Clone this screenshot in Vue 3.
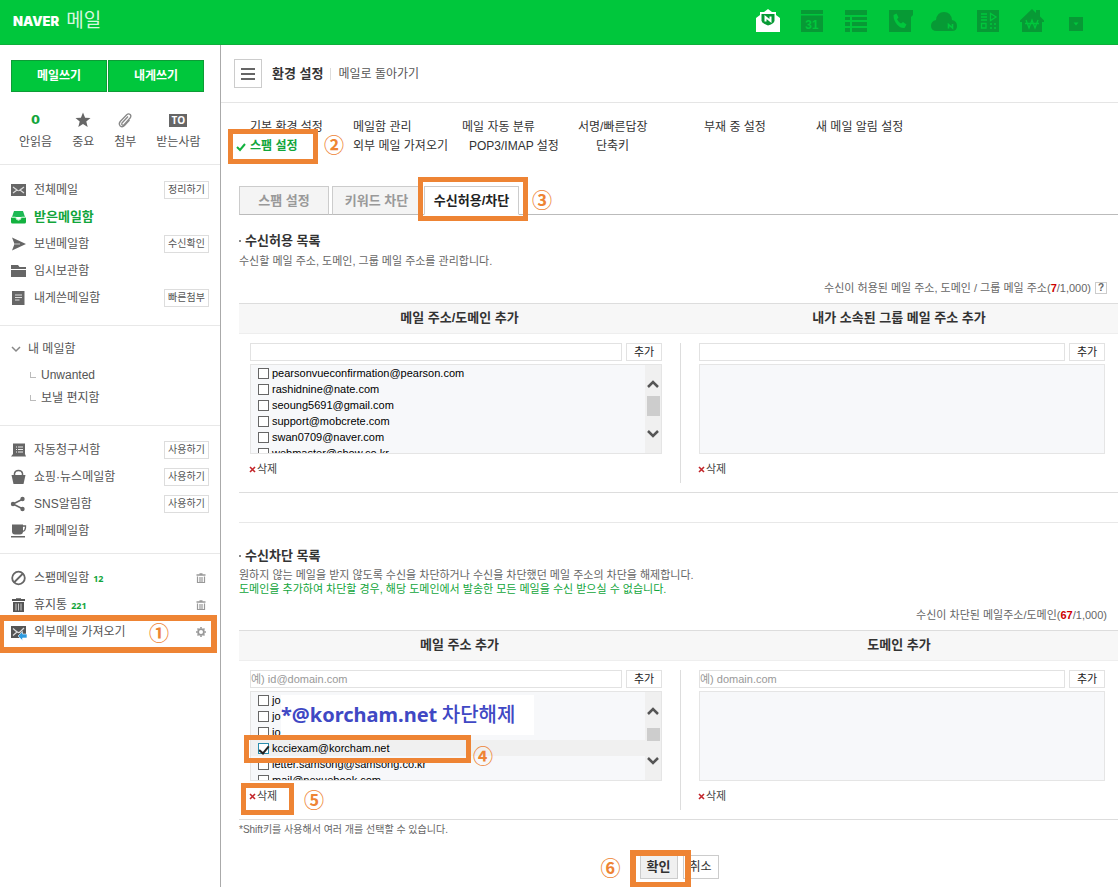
<script setup>
import { ref } from 'vue'

const icons = {
  envelope: '<path d="M0 2h15v12H0z" fill="#666"/><path d="M2 5l4 3-4 3M13 5L9 8l4 3M5 7Q7.500 10.500 10 7" fill="none" stroke="#ddd" stroke-width="1.200"/>',
  inbox: '<path d="M3 2h9l2 6H1z" fill="#1db954"/><path d="M0 8.500h4.500q.8 3 3 3t3-3H15V13q0 1.500-1.500 1.500h-12Q0 14.500 0 13z" fill="#12b23f"/><path d="M0.500 8.200h4q.8 2.600 3 2.600t3-2.600h4" fill="none" stroke="#b8f2c8"/>',
  sent: '<path d="M1 1.500L15 8 1 14.500 3.500 8z" fill="#666"/><path d="M3.500 8H9" stroke="#ccc"/>',
  folder: '<path d="M0 2h7l1.500 2H15v2H0zM0 7h15v7H0z" fill="#666"/>',
  note: '<path d="M1 1h12.500v14H1z" fill="#666"/><path d="M4 5h7M4 7.500h7M4 10h4.500" stroke="#ddd"/>',
  bill: '<path d="M2 1.500h12V12l1 2.500H0L2 12z" fill="#666"/><path d="M5 5h1M7 5h5M5 7.500h1M7 7.500h5M5 10h1M7 10h5" stroke="#eee"/>',
  bag: '<path d="M0.500 6h14L12.500 15h-10z" fill="#666"/><path d="M3.500 8V4.500Q4 1.500 7.500 1.500t4 3V8" fill="none" stroke="#666" stroke-width="1.500"/>',
  share: '<path d="M12 3L2 8l10 5" fill="none" stroke="#666" stroke-width="1.600"/><circle cx="11.500" cy="3" r="2.200" fill="#666"/><circle cx="2" cy="8" r="2.200" fill="#666"/><circle cx="11.500" cy="13" r="2.200" fill="#666"/>',
  cup: '<path d="M1 1.500h11v7q0 3-3 3H4q-3 0-3-3zM0 13h14v1.600H0z" fill="#666"/><path d="M12 3h2.500v1.500q0 3-3 4" fill="none" stroke="#666" stroke-width="1.300"/>',
  block: '<circle cx="7.500" cy="8" r="6.300" fill="none" stroke="#666" stroke-width="1.800"/><path d="M3 12.500l9-9" stroke="#666" stroke-width="1.800"/>',
  trash: '<path d="M1 3h13M5 2.200h5" stroke="#555" stroke-width="2"/><path d="M2 5h11v10H2z" fill="#555"/><path d="M5 6.500v7M7.500 6.500v7M10 6.500v7" stroke="#ccc"/>',
  external: '<path d="M0 2h15v12H0z" fill="#555"/><path d="M2 4.500l4 3.500-4 3.500M5 7q2.500 2.500 4 1L13 4" fill="none" stroke="#ddd" stroke-width="1.200"/><path d="M7 12l4.500-4.500V10H16v4h-4.500v2.500z" fill="#2d9be0" stroke="#fff" stroke-width=".6"/>',
  bin: '<path d="M0.500 2h9M3.500 1h3" stroke="#999" stroke-width="1.300"/><path d="M1.500 3.500v6h7v-6M4 4v5M6 4v5" fill="none" stroke="#999" stroke-width="1.200"/>',
  gear: '<circle cx="5" cy="5" r="2.900" fill="none" stroke="#999" stroke-width="1.800"/><path d="M5 0v1.500M5 8.500V10M0 5h1.500M8.500 5H10M1.500 1.500l1 1M7.500 7.500l1 1M8.500 1.500l-1 1M2.500 7.500l-1 1" stroke="#999" stroke-width="1.600"/>',
}

const services = [
  { label: '메일', svg: '<path d="M-1 9L3 6V3h4l4-3 4 3h4v3l4 3v14H-1z" fill="#fff"/><path d="M4.500 5h13v6.500q0 3-6.500 5-6.500-2-6.500-5z" fill="#079a35"/><path d="M8.500 12.500V8l5 4V7.500" fill="none" stroke="#fff" stroke-width="2"/>' },
  { label: '캘린더', svg: '<path d="M0 1h22v4H0zM0 6.500h22V23H0z" fill="#079a35"/><text x="11" y="19.500" text-anchor="middle" font-family="Liberation Sans, sans-serif" font-size="12" font-weight="700" fill="#00c73c">31</text>' },
  { label: '메모', svg: '<path d="M0 1h22v5H0zM0 8h5v3H0zM7 8h15v3H7zM0 13h5v4H0zM7 13h15v4H7zM0 19h5v4H0zM7 19h15v4H7z" fill="#079a35"/>' },
  { label: '주소록', svg: '<path d="M0 1h24v5l-2 2v15H0z" fill="#079a35"/><path d="M4.500 6l3-1.500 2 4-1.500 1.800q1.500 3 4 4.200l2-1.500 3.500 2.500-2 3.500q-4 .5-7.500-3.500T4.500 6z" fill="#00c73c"/>' },
  { label: '클라우드', svg: '<path d="M4 22q-6 0-6-5t5-6q1-8 8-8t8 8q5 1 5 6t-5 5z" fill="#079a35"/><path d="M15.500 19.500v-4l4 3.500v-4" fill="none" stroke="#00c73c" stroke-width="1.600"/>' },
  { label: '오피스', svg: '<path d="M0 1h22v22H0z" fill="#079a35"/><path d="M4 5h6M4 8h6M4 11h6M13 15h2M17 15h2M13 19h2M17 19h2" stroke="#00c73c" stroke-width="1.500"/><path d="M13.500 4.500v7L19 8zM4.500 14.500h4.500v4.500H4.500z" fill="none" stroke="#00c73c" stroke-width="1.300"/>' },
  { label: '가계부', svg: '<path d="M11 0l4 4V1h4v6.500l4 4V13h-2v10H1V13h-2v-1.500z" fill="#079a35"/><path d="M5 11l3 8 3-8 3 8 3-8M4 14.500h14" fill="none" stroke="#00c73c" stroke-width="1.300"/>' },
  { label: '더보기', svg: '<path d="M4 8h14v14H4z" fill="#079a35"/><path d="M8.500 13.500h5l-2.500 3z" fill="#00c73c"/>' },
]

const mainBoxes = [
  { icon: 'envelope', label: '전체메일', action: '정리하기' },
  { icon: 'inbox', label: '받은메일함', active: true },
  { icon: 'sent', label: '보낸메일함', action: '수신확인' },
  { icon: 'folder', label: '임시보관함' },
  { icon: 'note', label: '내게쓴메일함', action: '빠른첨부' },
]
const smartBoxes = [
  { icon: 'bill', label: '자동청구서함', action: '사용하기' },
  { icon: 'bag', label: '쇼핑·뉴스메일함', action: '사용하기' },
  { icon: 'share', label: 'SNS알림함', action: '사용하기' },
  { icon: 'cup', label: '카페메일함' },
]
const etcBoxes = [
  { icon: 'block', label: '스팸메일함', count: 12, tool: 'bin', toolLabel: '비우기' },
  { icon: 'trash', label: '휴지통', count: 221, tool: 'bin', toolLabel: '비우기' },
  { icon: 'external', label: '외부메일 가져오기', tool: 'gear', toolLabel: '설정', mark: '①' },
]

const allowed = ref([
  { mail: 'pearsonvueconfirmation@pearson.com', on: false },
  { mail: 'rashidnine@nate.com', on: false },
  { mail: 'seoung5691@gmail.com', on: false },
  { mail: 'support@mobcrete.com', on: false },
  { mail: 'swan0709@naver.com', on: false },
  { mail: 'webmaster@show.co.kr', on: false },
])
const blocked = ref([
  { mail: 'jo', on: false },
  { mail: 'jo', on: false },
  { mail: 'jo', on: false },
  { mail: 'kcciexam@korcham.net', on: true },
  { mail: 'letter.samsong@samsong.co.kr', on: false },
  { mail: 'mail@nexuebook.com', on: false },
])
</script>

<template>
  <div class="page">
    <header class="top">
      <a href="#" class="logo"><b>NAVER</b><span>메일</span></a>
      <nav class="services">
        <a v-for="s in services" :key="s.label" href="#" :aria-label="s.label">
          <svg width="24" height="24" viewBox="-1 0 24 24" v-html="s.svg"></svg>
        </a>
      </nav>
    </header>

    <div class="layout">
      <aside class="side">
        <div class="write">
          <button type="button">메일쓰기</button>
          <button type="button">내게쓰기</button>
        </div>
        <div class="quick">
          <a href="#"><i><b class="zero">0</b></i>안읽음</a>
          <a href="#"><i><svg width="16" height="16" viewBox="0 0 16 16"><path d="M8 .5l2.100 5.200 5.400.300-4.200 3.500 1.400 5.500L8 12l-4.700 3 1.400-5.500L.5 6l5.400-.3z" fill="#666" /></svg></i>중요</a>
          <a href="#"><i><svg width="16" height="16" viewBox="0 0 16 16"><path d="M11 4.500l-6 6.500q-.8 1.200.2 2 1 .6 1.900-.4l6-6.600q1.500-2 .1-3.500-1.700-1.400-3.500.2L3.200 9.500Q1.300 12 3.200 14q2.200 1.600 4.300-.4l5-5.600" fill="none" stroke="#888" stroke-width="1.300" /></svg></i>첨부</a>
          <a href="#"><i><b class="to">TO</b></i>받는사람</a>
        </div>

        <ul class="group">
          <li v-for="b in mainBoxes" :key="b.label" :class="{ active: b.active }">
            <svg width="16" height="16" viewBox="0 0 16 16" v-html="icons[b.icon]"></svg>
            <a href="#">{{ b.label }}</a>
            <button v-if="b.action" type="button" class="mini">{{ b.action }}</button>
          </li>
        </ul>
        <div class="group mine">
          <a href="#" class="mine-head"><svg width="10" height="6" viewBox="0 0 10 6"><path d="M1 1l4 4 4-4" fill="none" stroke="#888" stroke-width="1.500" /></svg>내 메일함</a>
          <a href="#" class="child">Unwanted</a>
          <a href="#" class="child">보낼 편지함</a>
        </div>
        <ul class="group smart">
          <li v-for="b in smartBoxes" :key="b.label">
            <svg width="16" height="16" viewBox="0 0 16 16" v-html="icons[b.icon]"></svg>
            <a href="#">{{ b.label }}</a>
            <button v-if="b.action" type="button" class="mini">{{ b.action }}</button>
          </li>
        </ul>
        <ul class="group last">
          <li v-for="b in etcBoxes" :key="b.label">
            <svg width="16" height="16" viewBox="0 0 16 16" v-html="icons[b.icon]"></svg>
            <a href="#">{{ b.label }}</a>
            <em v-if="b.count">{{ b.count }}</em>
            <button type="button" class="tool" :aria-label="b.toolLabel">
              <svg width="10" height="10" viewBox="0 0 10 10" v-html="icons[b.tool]"></svg>
            </button>
            <span v-if="b.mark" class="frame frame-side"></span>
            <span v-if="b.mark" class="num num-side">{{ b.mark }}</span>
          </li>
        </ul>
      </aside>

      <main class="main">
        <div class="title">
          <button type="button" class="burger" aria-label="메뉴">
            <svg width="14" height="12" viewBox="0 0 14 12"><path d="M0 1h14M0 6h14M0 11h14" stroke="#666" stroke-width="2" /></svg>
          </button>
          <h1>환경 설정</h1>
          <a href="#">메일로 돌아가기</a>
        </div>

        <nav class="menu">
          <div class="menu-row first">
            <a href="#">기본 환경 설정</a><a href="#">메일함 관리</a><a href="#">메일 자동 분류</a><a href="#">서명/빠른답장</a><a href="#">부재 중 설정</a><a href="#">새 메일 알림 설정</a>
          </div>
          <div class="menu-row second">
            <a href="#" class="current">
              <svg width="10" height="8" viewBox="0 0 10 8"><path d="M1 4l3 3 5-6" fill="none" stroke="#12b23f" stroke-width="2" /></svg>
              스팸 설정
              <span class="frame frame-menu"></span>
              <span class="num num-menu">②</span>
            </a>
            <a href="#">외부 메일 가져오기</a><a href="#">POP3/IMAP 설정</a><a href="#">단축키</a>
          </div>
        </nav>

        <div class="tabs">
          <button type="button">스팸 설정</button>
          <button type="button">키워드 차단</button>
          <button type="button" class="on">수신허용/차단<span class="frame frame-tab"></span><span class="num num-tab">③</span></button>
        </div>

        <section class="block allow">
          <h2>수신허용 목록</h2>
          <p>수신할 메일 주소, 도메인, 그룹 메일 주소를 관리합니다.</p>
          <div class="total">수신이 허용된 메일 주소, 도메인 / 그룹 메일 주소(<b>7</b>/1,000)<button type="button" class="help">?</button></div>
          <div class="pair">
            <div class="col">
              <h3>메일 주소/도메인 추가</h3>
              <div class="body">
                <div class="add"><input type="text" aria-label="메일 주소/도메인"><button type="button">추가</button></div>
                <div class="list">
                  <ul>
                    <li v-for="(a, i) in allowed" :key="i"><label><input v-model="a.on" type="checkbox">{{ a.mail }}</label></li>
                  </ul>
                  <div class="scroll">
                    <svg width="12" height="8" viewBox="0 0 12 8"><path d="M1 7l5-5 5 5" fill="none" stroke="#555" stroke-width="2.500" /></svg>
                    <i></i>
                    <svg width="12" height="8" viewBox="0 0 12 8"><path d="M1 1l5 5 5-5" fill="none" stroke="#555" stroke-width="2.500" /></svg>
                  </div>
                </div>
                <button type="button" class="del"><svg width="5" height="5" viewBox="0 0 5 5"><path d="M0 0l5 5M5 0L0 5" stroke="#c3262b" stroke-width="1.600" /></svg>삭제</button>
              </div>
            </div>
            <div class="col">
              <h3>내가 소속된 그룹 메일 주소 추가</h3>
              <div class="body">
                <div class="add"><input type="text" aria-label="그룹 메일 주소"><button type="button">추가</button></div>
                <div class="list"></div>
                <button type="button" class="del"><svg width="5" height="5" viewBox="0 0 5 5"><path d="M0 0l5 5M5 0L0 5" stroke="#c3262b" stroke-width="1.600" /></svg>삭제</button>
              </div>
            </div>
          </div>
        </section>

        <section class="block deny">
          <h2>수신차단 목록</h2>
          <p>원하지 않는 메일을 받지 않도록 수신을 차단하거나 수신을 차단했던 메일 주소의 차단을 해제합니다.</p>
          <p class="green">도메인을 추가하여 차단할 경우, 해당 도메인에서 발송한 모든 메일을 수신 받으실 수 없습니다.</p>
          <div class="total">수신이 차단된 메일주소/도메인(<b>67</b>/1,000)</div>
          <div class="pair">
            <div class="col">
              <h3>메일 주소 추가</h3>
              <div class="body">
                <div class="add"><input type="text" aria-label="메일 주소" placeholder="예) id@domain.com"><button type="button">추가</button></div>
                <div class="list-wrap">
                  <div class="list">
                    <ul>
                      <li v-for="(a, i) in blocked" :key="i" :class="{ picked: a.on }"><label><input v-model="a.on" type="checkbox">{{ a.mail }}</label></li>
                    </ul>
                    <div class="scroll low">
                      <svg width="12" height="8" viewBox="0 0 12 8"><path d="M1 7l5-5 5 5" fill="none" stroke="#555" stroke-width="2.500" /></svg>
                      <i></i>
                      <svg width="12" height="8" viewBox="0 0 12 8"><path d="M1 1l5 5 5-5" fill="none" stroke="#555" stroke-width="2.500" /></svg>
                    </div>
                  </div>
                  <span class="memo"><b>*@korcham.net</b> 차단해제</span>
                  <span class="frame frame-row"></span>
                  <span class="num num-row">④</span>
                </div>
                <button type="button" class="del"><svg width="5" height="5" viewBox="0 0 5 5"><path d="M0 0l5 5M5 0L0 5" stroke="#c3262b" stroke-width="1.600" /></svg>삭제<span class="frame frame-del"></span><span class="num num-del">⑤</span></button>
              </div>
            </div>
            <div class="col">
              <h3>도메인 추가</h3>
              <div class="body">
                <div class="add"><input type="text" aria-label="도메인" placeholder="예) domain.com"><button type="button">추가</button></div>
                <div class="list"></div>
                <button type="button" class="del"><svg width="5" height="5" viewBox="0 0 5 5"><path d="M0 0l5 5M5 0L0 5" stroke="#c3262b" stroke-width="1.600" /></svg>삭제</button>
              </div>
            </div>
          </div>
          <small>*Shift키를 사용해서 여러 개를 선택할 수 있습니다.</small>
        </section>

        <div class="confirm">
          <button type="button" class="ok">확인<span class="frame frame-ok"></span><span class="num num-ok">⑥</span></button>
          <button type="button">취소</button>
        </div>
      </main>
    </div>
  </div>
</template>

<style>
html, body { margin: 0; background: #fff; }
</style>

<style scoped>
.page {
  font: 12px/16px "Liberation Sans", "Noto Sans CJK KR", sans-serif;
  color: #333;
  min-height: 100vh;
  display: flex;
  flex-direction: column;
}
.page * { box-sizing: border-box; }
a { color: inherit; text-decoration: none; }
button { font: inherit; color: inherit; padding: 0; border: 0; background: none; cursor: pointer; white-space: nowrap; }
h1, h2, h3, p, ul { margin: 0; padding: 0; }
ul { list-style: none; }
svg { display: block; overflow: visible; flex: none; }

.top {
  height: 45px;
  background: #00c73c;
  border-bottom: 1px solid #0fae3b;
  display: flex;
  justify-content: space-between;
  padding: 0 20px 3px 13px;
}
.logo { display: flex; align-items: center; gap: 7px; color: #fff; }
.logo b { font: 900 13px/20px Inter, sans-serif; }
.logo span { font-size: 19px; line-height: 20px; color: #d5f7df; }
.services { display: flex; align-items: center; }
.services a { width: 44px; display: flex; justify-content: center; }

.layout { flex: 1; display: flex; align-items: stretch; }
.side { width: 221px; flex: none; border-right: 1px solid #aaa; color: #555; }
.write { display: flex; gap: 1px; padding: 15px 16px 0 11px; }
.write button {
  flex: 1;
  height: 32px;
  background: #00c73c;
  border: 1px solid #0d9c36;
  color: #fff;
  font-size: 12px;
  font-weight: 700;
}
.quick { display: flex; height: 72px; padding: 20px 0 0 19px; gap: 20px; }
.quick a { text-align: center; }
.quick i { height: 16px; margin-bottom: 6px; display: flex; align-items: center; justify-content: center; font-style: normal; }
.zero { font: 700 13px/16px "DejaVu Sans", sans-serif; color: #12a53b; }
.to { background: #666; color: #fff; font: 700 10px/13px "Open Sans", sans-serif; width: 18px; height: 13px; }
.group { border-top: 1px solid #e8e8e8; padding: 11px 11px 14px; }
.group li { height: 27px; display: flex; align-items: center; position: relative; }
.group li > a { margin-left: 7px; }
.group .active { color: #12a53b; font-size: 13px; font-weight: 700; }
.mini { margin-left: auto; width: 45px; height: 18px; border: 1px solid #ddd; font-size: 10px; line-height: 16px; }
.mine { padding: 11px 11px 15px; height: 100px; }
.mine a { display: flex; align-items: center; }
.mine-head { gap: 7px; height: 24px; }
.child { height: 23px; padding-left: 19px; }
.mine-head + .child { margin-top: 2px; }
.child::before { content: ""; width: 5px; height: 5px; border: solid #bbb; border-width: 0 0 1px 1px; margin-right: 5px; }
.smart { padding: 10px 11px 9px; }
.group em { font: 700 9px/12px "Noto Sans", sans-serif; color: #12a53b; margin: 2px 0 0 4px; }
.last { padding-top: 10px; }
.tool { margin-left: auto; margin-right: 3px; width: 10px; height: 10px; }

.main { flex: 1; min-width: 0; }
.title { height: 58px; border-bottom: 1px solid #e5e5e5; display: flex; align-items: center; padding-left: 13px; }
.burger { width: 28px; height: 29px; border: 1px solid #ccc; display: flex; align-items: center; justify-content: center; }
.title h1 { font-size: 13px; line-height: 16px; margin-left: 10px; padding-right: 7px; }
.title a { padding-left: 7px; color: #555; border-left: 1px solid #ddd; line-height: 12px; }
.menu { padding: 15px 0 0 29px; }
.menu-row { display: grid; line-height: 19px; white-space: nowrap; }
.first { grid-template-columns: 103px 109px 116px 126px 112px 1fr; }
.second { grid-template-columns: 103px 116px 127px 1fr; }
.current { position: relative; color: #12a53b; font-weight: 700; }
.current svg { position: absolute; left: -14px; top: 6px; }

.tabs { display: flex; gap: 3px; margin: 30px 0 0 18px; height: 29px; border-bottom: 1px solid #bbb; }
.tabs button {
  width: 90px;
  height: 29px;
  border: 1px solid #ccc;
  border-bottom-color: #bbb;
  background: #f4f4f4;
  color: #999;
  font-size: 13px;
  font-weight: 700;
}
.tabs button:nth-child(2) { width: 89px; }
.tabs .on { width: 95px; background: #fff; color: #222; border-bottom-color: #fff; position: relative; }

.block { padding-left: 18px; }
.allow { padding-top: 17px; }
.deny { padding-top: 24px; border-top: 1px solid #e8e8e8; margin: 29px 0 0 18px; padding-left: 0; }
.block h2 { font-size: 13px; line-height: 18px; color: #333; display: flex; align-items: center; }
.block h2::before { content: ""; width: 2px; height: 2px; background: #888; margin-right: 4px; }
.block p { font-size: 11px; line-height: 14px; color: #666; margin-top: 4px; }
.deny h2 + p { margin-top: 3px; }
.block p.green { color: #12a53b; margin-top: 0; }
.total { font-size: 11px; line-height: 16px; color: #666; display: flex; justify-content: flex-end; align-items: center; padding-right: 11px; }
.allow .total { margin: 12px 0 7px; }
.deny .total { margin: 11px 0 7px; }
.total b { color: #c00; }
.help { width: 12px; height: 12px; border: 1px solid #ccc; margin-left: 4px; font: 700 10px/10px "Liberation Sans", sans-serif; }
.pair { display: grid; grid-template-columns: minmax(0, 441fr) minmax(0, 438fr); border-top: 1px solid #ddd; border-bottom: 1px solid #ddd; padding-bottom: 9px; }
.col h3 { height: 30px; background: #f7f7f7; border-bottom: 1px solid #eee; font-size: 13px; line-height: 27px; text-align: center; color: #333; }
.body { margin-top: 9px; height: 140px; padding: 0 13px 0 19px; }
.col:first-child .body { padding: 0 18px 0 11px; border-right: 1px solid #ddd; margin-right: -1px; }
.add { display: flex; gap: 4px; height: 18px; margin-bottom: 3px; }
.add input { flex: 1; min-width: 0; border: 1px solid #e2e2e2; padding: 0; font: inherit; font-size: 11px; border-radius: 0; outline: 0; }
.add input::placeholder { color: #999; }
.add button { width: 36px; border: 1px solid #e2e2e2; font-size: 11px; line-height: 14px; color: #222; }
.list-wrap { position: relative; }
.list { height: 90px; border: 1px solid #e5e5e5; background: #f7f8fa; overflow: hidden; display: flex; }
.list ul { flex: 1; color: #000; font: 11px/16px "Liberation Sans", sans-serif; }
.list li { height: 16px; padding-left: 7px; }
.list label { display: flex; align-items: center; gap: 3px; }
.list input { appearance: none; margin: 0; width: 11px; height: 11px; border: 1px solid #666; background: #fff; display: grid; place-items: center; }
.list input:checked { border-color: #2a8dad; }
.list input:checked::after { content: ""; width: 4px; height: 8px; border: solid #222; border-width: 0 2px 2px 0; transform: rotate(40deg); margin-bottom: 3px; }
.picked { background: #f0f0f0; }
.scroll { width: 16px; background: #f0f0f0; display: flex; flex-direction: column; align-items: center; padding: 15px 0; }
.scroll i { width: 13px; height: 20px; background: #cdcdcd; margin: 8px 0 14px; }
.scroll.low i { height: 13px; margin: 13px 0 16px; }
.del { display: flex; align-items: center; gap: 2px; margin-top: 7px; font-size: 11px; line-height: 16px; color: #444; position: relative; }
.block small { display: block; font-size: 10px; line-height: 14px; color: #666; margin-top: 3px; }

.confirm { display: flex; justify-content: center; gap: 5px; margin-top: 18px; padding-right: 5px; padding-left: 24px; padding-bottom: 8px; }
.confirm button { width: 36px; height: 24px; border: 1px solid #ccc; font-size: 12px; }
.confirm .ok { width: 38px; background: #f0f0f0; font-size: 13px; font-weight: 700; position: relative; }

.memo {
  position: absolute;
  left: 31px;
  top: 4px;
  height: 40px;
  width: 253px;
  background: #fff;
  color: #4048c4;
  font: 500 20px/38px "Noto Sans CJK KR", sans-serif;
  white-space: nowrap;
}
.memo b { font: 700 20px/38px "Noto Sans", sans-serif; }
.frame { position: absolute; border: 5px solid #ee8434; z-index: 2; pointer-events: none; }
.num { position: absolute; z-index: 3; color: #ee8434; font: 700 20px/20px "Noto Sans CJK KR", sans-serif; }
.frame-side { left: -13px; top: -3px; width: 219px; height: 38px; border-width: 6px; }
.num-side { left: 138px; top: 5px; }
.frame-menu { left: -22px; top: -8px; width: 90px; height: 35px; }
.num-menu { left: 74px; top: -2px; }
.frame-tab { left: -7px; top: -10px; width: 110px; height: 44px; }
.num-tab { left: 107px; top: 3px; }
.frame-row { left: -6px; top: 44px; width: 227px; height: 28px; }
.num-row { left: 223px; top: 55px; }
.frame-del { left: -9px; top: -5px; width: 53px; height: 32px; }
.num-del { left: 54px; top: 2px; }
.frame-ok { left: -11px; top: -6px; width: 61px; height: 38px; border-width: 6px; }
.num-ok { left: -40px; top: 2px; }
</style>
